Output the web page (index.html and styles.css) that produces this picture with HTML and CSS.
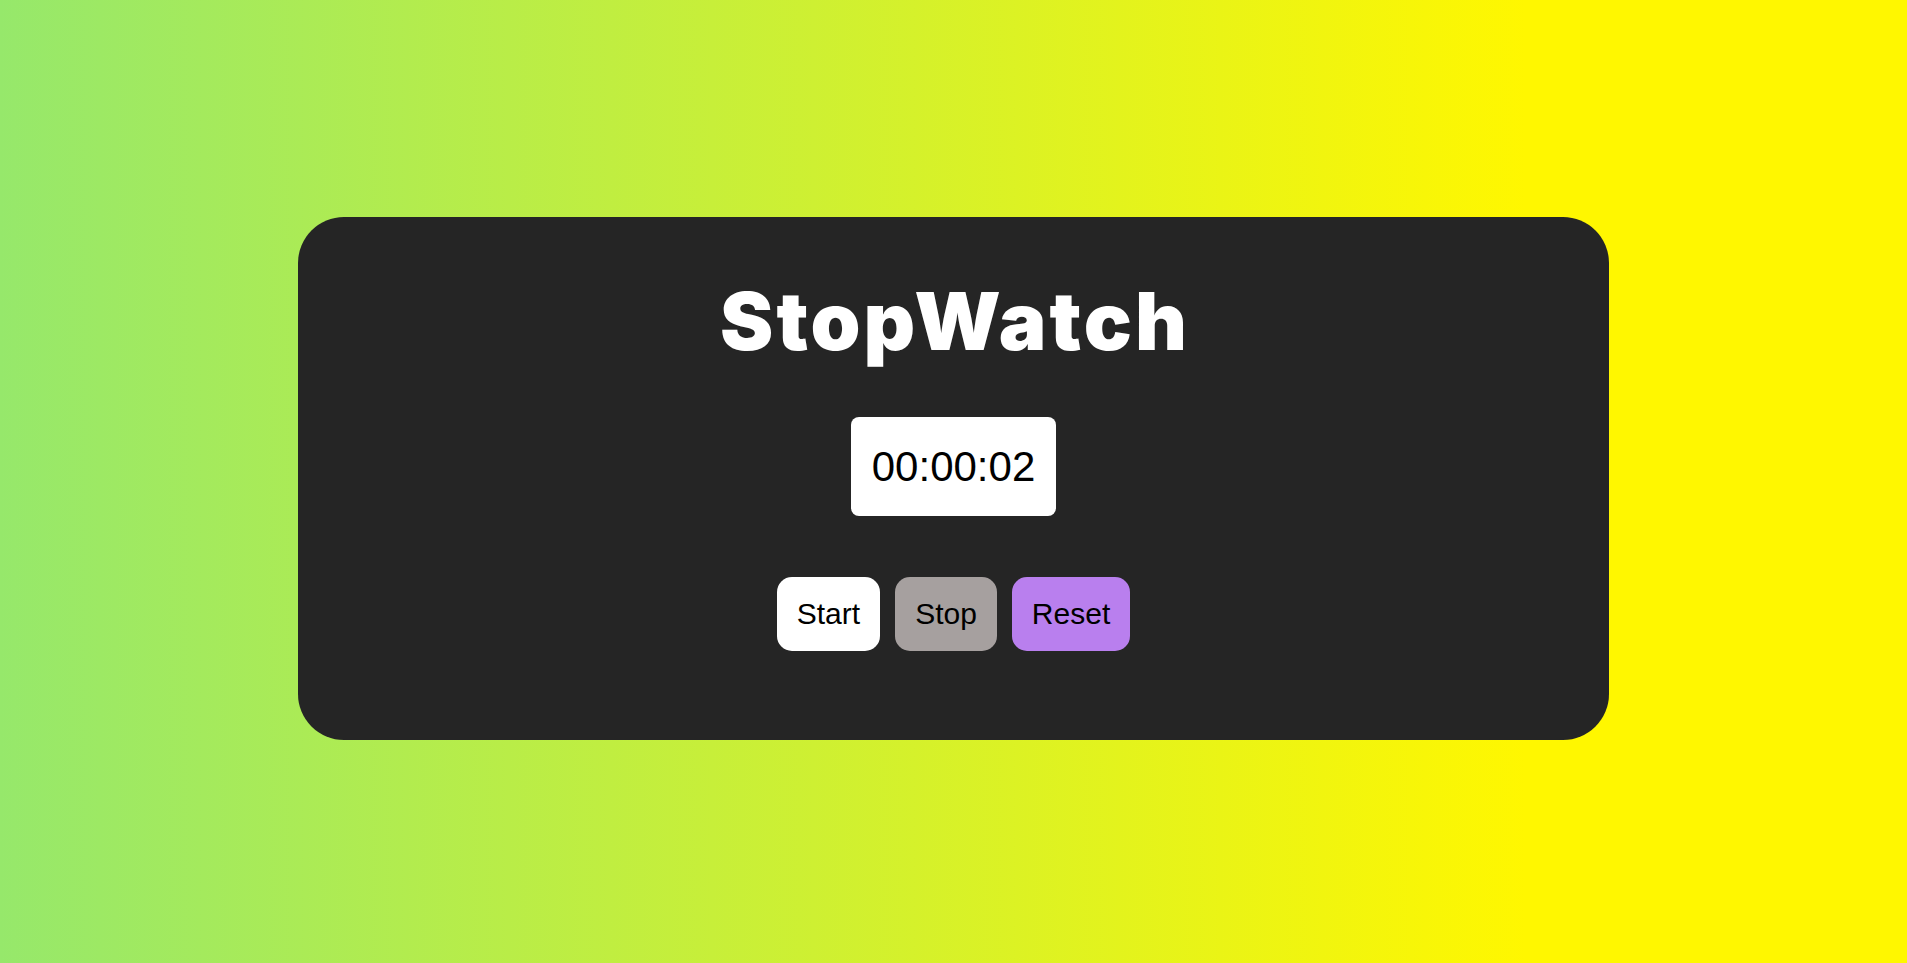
FILE: index.html
```html
<!DOCTYPE html>
<html lang="en">
<head>
<meta charset="UTF-8">
<title>StopWatch</title>
<link rel="stylesheet" href="styles.css">
</head>
<body>
<main class="page">
  <section class="card">
    <h1 class="title">StopWatch</h1>
    <div class="display">00:00:02</div>
    <div class="controls">
      <button class="btn btn-start">Start</button>
      <button class="btn btn-stop">Stop</button>
      <button class="btn btn-reset">Reset</button>
    </div>
  </section>
</main>
</body>
</html>
```
FILE: styles.css
```css
* { box-sizing: border-box; }
html, body { margin: 0; padding: 0; }
body {
  font-family: "Liberation Sans", Arial, sans-serif;
  background: linear-gradient(90deg, #96e86b 0%, #fff700 80%);
  min-height: 100vh;
}
.page {
  min-height: 100vh;
  display: flex;
  align-items: center;
  justify-content: center;
  padding-bottom: 6px;
}
.card {
  width: 1311px;
  height: 523px;
  background: #252525;
  border-radius: 46px;
  display: flex;
  flex-direction: column;
  align-items: center;
  padding-top: 64px;
}
.title {
  margin: 0;
  font-family: Inter, "Open Sans", sans-serif;
  font-weight: 900;
  font-size: 80px;
  line-height: 80px;
  color: #ffffff;
  letter-spacing: 3px;
  padding-left: 3px;
}
.display {
  margin-top: 56px;
  background: #ffffff;
  color: #000;
  font-size: 42px;
  line-height: 47px;
  padding: 26px 21px;
  border-radius: 8px;
}
.controls {
  margin-top: 61px;
  display: flex;
  gap: 15px;
}
.btn {
  font-family: "Liberation Sans", Arial, sans-serif;
  font-size: 30px;
  line-height: 34px;
  padding: 20px;
  border: none;
  border-radius: 15px;
  color: #000;
}
.btn-start { background: #ffffff; }
.btn-stop { background: #a6a09f; }
.btn-reset { background: #b97fee; }
```
